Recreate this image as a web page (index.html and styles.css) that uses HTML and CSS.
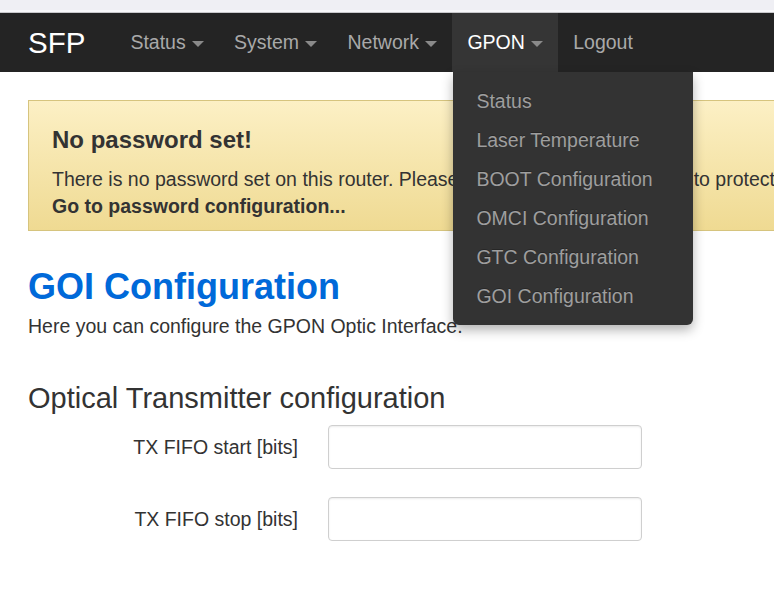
FILE: index.html
```html
<!DOCTYPE html>
<html>
<head>
<meta charset="utf-8">
<title>SFP - GOI Configuration</title>
<link rel="stylesheet" href="styles.css">
</head>
<body>
<div class="page">
  <div class="topstrip"></div>
  <header class="navbar">
    <a class="brand" href="#">SFP</a>
    <ul class="nav">
      <li class="nav-item"><a href="#">Status<span class="caret"></span></a></li>
      <li class="nav-item"><a href="#">System<span class="caret"></span></a></li>
      <li class="nav-item"><a href="#">Network<span class="caret"></span></a></li>
      <li class="nav-item active"><a href="#">GPON<span class="caret"></span></a>
        <ul class="dropdown">
          <li><a href="#">Status</a></li>
          <li><a href="#">Laser Temperature</a></li>
          <li><a href="#">BOOT Configuration</a></li>
          <li><a href="#">OMCI Configuration</a></li>
          <li><a href="#">GTC Configuration</a></li>
          <li><a href="#">GOI Configuration</a></li>
        </ul>
      </li>
      <li class="nav-item"><a href="#">Logout</a></li>
    </ul>
  </header>
  <main class="content">
    <div class="alert">
      <h4 class="alert-title">No password set!</h4>
      <p class="alert-text">There is no password set on this router. Please configure a root password to protect the web interface.<br><a class="alert-link" href="#">Go to password configuration...</a></p>
    </div>
    <h2 class="page-title">GOI Configuration</h2>
    <p class="page-desc">Here you can configure the GPON Optic Interface.</p>
    <h3 class="section-title">Optical Transmitter configuration</h3>
    <form class="form">
      <div class="form-row">
        <label class="form-label" for="fstart">TX FIFO start [bits]</label>
        <input class="form-input" id="fstart" type="text">
      </div>
      <div class="form-row">
        <label class="form-label" for="fstop">TX FIFO stop [bits]</label>
        <input class="form-input" id="fstop" type="text">
      </div>
    </form>
  </main>
</div>
</body>
</html>
```
FILE: styles.css
```css
html, body {
  margin: 0;
  padding: 0;
  background: #fff;
}
body {
  font-family: "Liberation Sans", Arial, sans-serif;
  font-size: 19.5px;
  color: #333;
}
.page {
  width: 774px;
  overflow: hidden;
  min-height: 603px;
}
.topstrip {
  height: 10px;
  background: #efeff4;
  border-bottom: 2px solid #f8f8fa;
}
.navbar {
  height: 59px;
  border-top: 1px solid #c9c9cc;
  background: #242424;
  display: flex;
  align-items: stretch;
  padding-left: 28px;
}
.brand {
  font-size: 29.5px;
  color: #fff;
  text-decoration: none;
  line-height: 59px;
  margin-right: 30px;
}
.nav {
  list-style: none;
  margin: 0;
  padding: 0;
  display: flex;
}
.nav-item {
  position: relative;
}
.nav-item > a {
  display: flex;
  align-items: center;
  height: 59px;
  padding: 0 15px;
  color: #a9a9a9;
  text-decoration: none;
}
.nav-item.active > a {
  background: #353535;
  color: #fff;
}
.caret {
  display: inline-block;
  width: 0;
  height: 0;
  margin-left: 6.4px;
  margin-top: 2px;
  border-left: 6px solid transparent;
  border-right: 6px solid transparent;
  border-top: 6px solid #8a8a8a;
}
.dropdown {
  position: absolute;
  top: 59px;
  left: 1px;
  width: 240px;
  margin: 0;
  padding: 10px 0 9px;
  list-style: none;
  background: #333;
  border-radius: 0 0 6px 6px;
  box-shadow: 0 5px 12px rgba(0, 0, 0, 0.3);
  z-index: 10;
}
.dropdown a {
  display: block;
  padding: 0 23px;
  line-height: 39px;
  color: #9e9e9e;
  text-decoration: none;
  white-space: nowrap;
  text-shadow: 0 -1px 0 rgba(0, 0, 0, 0.25);
}
.content {
  padding: 28px 0 0 28px;
}
.alert {
  width: 1100px;
  box-sizing: border-box;
  padding: 26px 23px 9px;
  border: 1px solid #d6c47e;
  background: linear-gradient(#fcf0c5, #efda92);
}
.alert-title {
  margin: 0 0 13px;
  font-size: 24px;
  font-weight: bold;
  line-height: 1.1;
}
.alert-text {
  margin: 0;
  line-height: 1.39;
}
.alert-link {
  color: #333;
  font-weight: bold;
  text-decoration: none;
}
.page-title {
  margin: 36px 0 0;
  font-size: 36px;
  font-weight: bold;
  line-height: 1.1;
  color: #0069d9;
}
.page-desc {
  margin: 9px 0 0;
  line-height: 1.2;
}
.section-title {
  margin: 44px 0 0;
  font-size: 29px;
  font-weight: normal;
  line-height: 1.1;
}
.form {
  margin-top: 11px;
  display: flex;
  flex-direction: column;
  gap: 28px;
}
.form-row {
  display: grid;
  grid-template-columns: 270px 314px;
  column-gap: 30px;
  align-items: center;
}
.form-label {
  text-align: right;
}
.form-input {
  box-sizing: border-box;
  height: 44px;
  width: 314px;
  border: 1px solid #cfcfcf;
  border-radius: 4px;
  box-shadow: inset 0 1px 2px rgba(0, 0, 0, 0.08);
  background: #fff;
  font: inherit;
  padding: 0 12px;
}
```
